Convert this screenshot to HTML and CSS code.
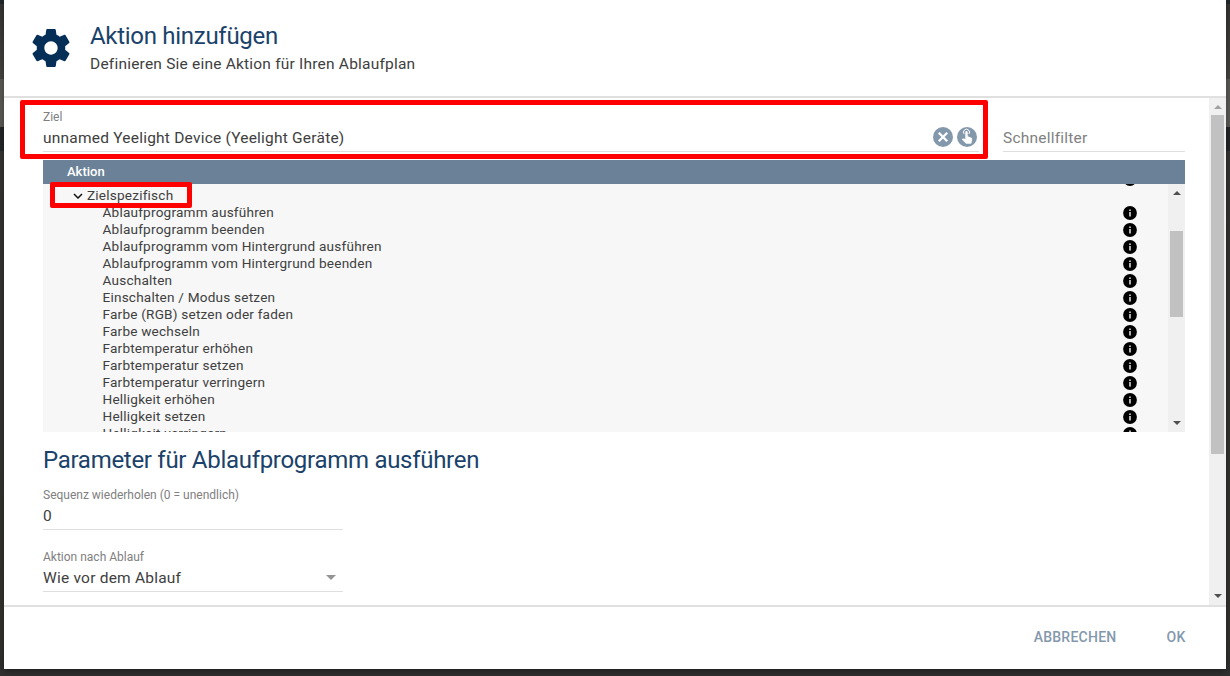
FILE: index.html
```html
<!DOCTYPE html>
<html lang="de">
<head>
<meta charset="utf-8">
<title>Aktion hinzufügen</title>
<link rel="stylesheet" href="styles.css">
</head>
<body>
<svg class="defs" width="0" height="0">
  <symbol id="info" viewBox="0 0 14 14"><circle cx="7" cy="7" r="6.9" fill="#000"/><path d="M6.2 3.4h1.6v1.5H6.2zM6.2 6h1.6v4.4H6.2z" fill="#ddd"/></symbol>
</svg>
<main class="dialog">
  <header class="head">
    <svg class="gear" viewBox="2 2 20 20"><path fill="#052f57" d="M19.43 12.98c.04-.32.07-.64.07-.98s-.03-.66-.07-.98l2.11-1.65c.19-.15.24-.42.12-.64l-2-3.46c-.12-.22-.39-.3-.61-.22l-2.49 1c-.52-.4-1.08-.73-1.69-.98l-.38-2.65C14.46 2.18 14.25 2 14 2h-4c-.25 0-.46.18-.49.42l-.38 2.65c-.61.25-1.17.59-1.69.98l-2.49-1c-.23-.09-.49 0-.61.22l-2 3.46c-.13.22-.07.49.12.64l2.11 1.65c-.04.32-.07.65-.07.98s.03.66.07.98l-2.11 1.65c-.19.15-.24.42-.12.64l2 3.46c.12.22.39.3.61.22l2.49-1c.52.4 1.08.73 1.69.98l.38 2.65c.03.24.24.42.49.42h4c.25 0 .46-.18.49-.42l.38-2.65c.61-.25 1.17-.59 1.69-.98l2.49 1c.23.09.49 0 .61-.22l2-3.46c.12-.22.07-.49-.12-.64l-2.11-1.65zM12 15.5c-1.93 0-3.5-1.57-3.5-3.5s1.57-3.5 3.5-3.5 3.5 1.57 3.5 3.5-1.57 3.5-3.5 3.5z"/></svg>
    <div class="titles">
      <h1 class="title">Aktion hinzufügen</h1>
      <p class="subtitle">Definieren Sie eine Aktion für Ihren Ablaufplan</p>
    </div>
  </header>
  <div class="body">
    <div class="content">
      <div class="fields">
        <div class="field target">
          <label class="label">Ziel</label>
          <div class="value"><span>unnamed Yeelight Device (Yeelight Geräte)</span>
            <span class="tools">
              <svg class="tool" viewBox="0 0 20 20"><circle cx="10" cy="10" r="10" fill="#8498ac"/><path d="M5.8 5.8l8.4 8.4M14.2 5.8l-8.4 8.4" stroke="#fff" stroke-width="2.3"/></svg>
              <svg class="tool" viewBox="0 0 20 20"><circle cx="10" cy="10" r="10" fill="#8498ac"/><path d="M7.2 7.1a3 3 0 1 1 4.6 0" fill="none" stroke="#fff" stroke-width="1"/><path d="M8.3 5.2a1.2 1.2 0 0 1 2.4 0v4l3.7 1.6q1 .5.8 1.4l-.6 3.5q-.2 1-1.3 1H9.7q-.6 0-1-.5L4.8 12.3l.6-.6q.4-.4 1-.2l1.9.5z" fill="#fff"/></svg>
            </span>
          </div>
        </div>
        <div class="field filter"><div class="value hint">Schnellfilter</div></div>
      </div>
      <section class="table">
        <div class="thead">Aktion</div>
        <div class="tbody">
          <div class="rows">
            <div class="row lead"><svg class="info"><use href="#info"/></svg></div>
            <div class="row group"><svg class="chev" viewBox="0 0 10 6"><path d="M1 1l4 4 4-4" fill="none" stroke="#111" stroke-width="1.5"/></svg>Zielspezifisch</div>
            <div class="row">Ablaufprogramm ausführen<svg class="info"><use href="#info"/></svg></div>
            <div class="row">Ablaufprogramm beenden<svg class="info"><use href="#info"/></svg></div>
            <div class="row">Ablaufprogramm vom Hintergrund ausführen<svg class="info"><use href="#info"/></svg></div>
            <div class="row">Ablaufprogramm vom Hintergrund beenden<svg class="info"><use href="#info"/></svg></div>
            <div class="row">Auschalten<svg class="info"><use href="#info"/></svg></div>
            <div class="row">Einschalten / Modus setzen<svg class="info"><use href="#info"/></svg></div>
            <div class="row">Farbe (RGB) setzen oder faden<svg class="info"><use href="#info"/></svg></div>
            <div class="row">Farbe wechseln<svg class="info"><use href="#info"/></svg></div>
            <div class="row">Farbtemperatur erhöhen<svg class="info"><use href="#info"/></svg></div>
            <div class="row">Farbtemperatur setzen<svg class="info"><use href="#info"/></svg></div>
            <div class="row">Farbtemperatur verringern<svg class="info"><use href="#info"/></svg></div>
            <div class="row">Helligkeit erhöhen<svg class="info"><use href="#info"/></svg></div>
            <div class="row">Helligkeit setzen<svg class="info"><use href="#info"/></svg></div>
            <div class="row">Helligkeit verringern<svg class="info"><use href="#info"/></svg></div>
          </div>
          <div class="bar inner"><i class="arrow up"></i><i class="thumb"></i><i class="arrow down"></i></div>
        </div>
      </section>
      <h2 class="title params">Parameter für Ablaufprogramm ausführen</h2>
      <div class="field small">
        <label class="label">Sequenz wiederholen (0 = unendlich)</label>
        <div class="value">0</div>
      </div>
      <div class="field small">
        <label class="label">Aktion nach Ablauf</label>
        <div class="value">Wie vor dem Ablauf<i class="caret"></i></div>
      </div>
    </div>
    <div class="bar outer"><i class="arrow up dim"></i><i class="thumb"></i><i class="arrow down"></i></div>
  </div>
  <footer class="foot"><button class="btn">ABBRECHEN</button><button class="btn">OK</button></footer>
  <div class="mark mark-target"></div>
  <div class="mark mark-group"></div>
</main>
</body>
</html>
```
FILE: styles.css
```css
* { box-sizing: border-box; }
body {
  margin: 0; height: 676px; overflow: hidden; padding: 0 4px;
  font-family: Roboto, "Liberation Sans", sans-serif; color: #404040;
  background: linear-gradient(#20282b 0 4px, #363533 4px, #464542 79px, #5c5b57 79px 127px, #252628 127px 151px, #363533 151px, #33322f 640px, #303030 669px);
}
.defs { position: absolute; }
.dialog { position: relative; height: 669px; background: #fff; display: flex; flex-direction: column; box-shadow: 0 2px 7px rgba(0,0,0,.4); }
.head { height: 98px; flex: none; display: flex; border-bottom: 2px solid #e0e0e0; padding: 21px 0 0 28px; }
.gear { width: 38px; height: 40px; margin-top: 7px; }
.titles { margin-left: 20px; }
.title { margin: 0; font-size: 24px; line-height: 30px; font-weight: 400; letter-spacing: -.29px; color: #1a426a; }
.subtitle { margin: 3px 0 0; font-size: 15.5px; line-height: 20px; letter-spacing: .21px; }
.body { flex: 1; min-height: 0; display: flex; overflow: hidden; }
.content { flex: 1; padding: 0 24px 0 39px; }
.fields { display: flex; gap: 24px; height: 62px; align-items: flex-start; padding-top: 10px; }
.field .label { display: block; font-size: 12px; line-height: 18px; color: #808080; }
.field .value { display: flex; align-items: center; justify-content: space-between; height: 26px; font-size: 15.5px; letter-spacing: .22px; padding-bottom: 2px; border-bottom: 1px solid #dedede; white-space: nowrap; }
.target { width: 936px; }
.filter { flex: 1; padding-top: 18px; }
.field .hint { color: #808080; }
.tools { display: flex; gap: 4px; margin: -1px 2px 0 0; }
.tool { width: 20px; height: 20px; }
.thead { height: 24px; background: #6a8197; color: #fff; font-size: 13px; font-weight: 500; line-height: 23px; padding-left: 24px; }
.tbody { height: 248px; background: #f7f7f7; display: flex; overflow: hidden; }
.rows { flex: 1; margin-top: -14px; }
.row { height: 17px; line-height: 17px; font-size: 13.6px; letter-spacing: .2px; padding: 0 31px 0 59.5px; display: flex; justify-content: space-between; white-space: nowrap; }
.row.lead { justify-content: flex-end; }
.row.group { padding-left: 30px; justify-content: flex-start; }
.chev { width: 10px; height: 6px; margin: 6px 4px 0 0; }
.info { width: 14px; height: 14px; margin-top: 2px; flex: none; }
.bar { width: 17px; background: #f0f0f0; display: flex; flex-direction: column; align-items: center; flex: none; }
.thumb { width: 13px; background: #c1c1c1; }
.arrow { border: 4px solid transparent; border-top-width: 0; border-bottom: 4px solid #505050; }
.arrow.down { border-bottom-width: 0; border-top: 4px solid #505050; margin-top: auto; }
.arrow.dim { border-bottom-color: #a0a0a0; }
.inner { padding: 7px 0; }
.inner .thumb { height: 86px; margin-top: 36px; }
.outer { padding: 7px 0; }
.outer .thumb { height: 339px; margin-top: 6px; }
.params { margin: 13px 0 11px; }
.small { width: 300px; margin-bottom: 18px; }
.caret { border: 5px solid transparent; border-top-color: #949494; border-bottom: 0; margin-right: 7px; }
.foot { height: 64px; flex: none; border-top: 2px solid #e0e0e0; display: flex; justify-content: flex-end; align-items: center; padding: 0 40.5px 2px 0; gap: 50px; }
.btn { border: 0; padding: 0; background: none; font: 500 14px/20px Roboto, sans-serif; letter-spacing: .25px; color: #8498ac; }
.mark { position: absolute; border: 5px solid #f00; border-radius: 2px; }
.mark-target { left: 16px; top: 100px; width: 968px; height: 59px; }
.mark-group { left: 46px; top: 182px; width: 142px; height: 26px; }
```
